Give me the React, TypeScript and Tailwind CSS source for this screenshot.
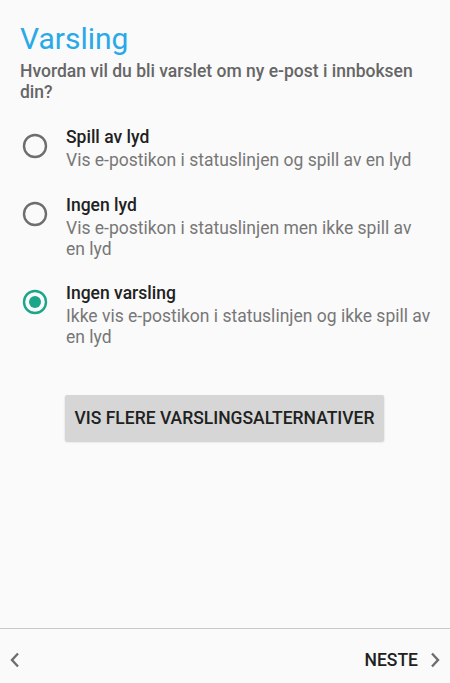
import React from 'react';

// line breaks follow the original screen
const OPTIONS = [
  { id: 'lyd', title: 'Spill av lyd', desc: 'Vis e-postikon i statuslinjen og spill av en lyd' },
  { id: 'ingen-lyd', title: 'Ingen lyd', desc: 'Vis e-postikon i statuslinjen men ikke spill av\nen lyd' },
  { id: 'ingen', title: 'Ingen varsling', desc: 'Ikke vis e-postikon i statuslinjen og ikke spill av\nen lyd' },
];

function Radio({ checked }: { checked: boolean }) {
  return (
    <svg width="26" height="26" viewBox="0 0 26 26" className="shrink-0">
      <circle cx="13" cy="13" r="11" fill="none" stroke={checked ? '#1aa68a' : '#6e6e6e'} strokeWidth="2.4" />
      {checked && <circle cx="13" cy="13" r="6" fill="#1aa68a" />}
    </svg>
  );
}

export default function App() {
  const selected = 'ingen';

  return (
    <div className="w-[450px] h-[683px] bg-[#fafafa] flex flex-col font-['Roboto',sans-serif] overflow-hidden">
      {/* Content */}
      <div className="flex-1 px-5 pt-[21px]">
        <h1 className="text-[30px] leading-[36px] text-[#29a9e8] font-normal">Varsling</h1>
        <p className="mt-[4px] text-[17.5px] leading-[21px] font-medium text-[#666666] pr-2">
          Hvordan vil du bli varslet om ny e-post i innboksen din?
        </p>

        <div className="mt-[22px] flex flex-col gap-[21.5px] -mr-3">
          {OPTIONS.map((o) => (
            <div key={o.id} className="flex items-start">
              <div className="w-[46px] pt-[8px] shrink-0">
                <div className="ml-[2px]">
                  <Radio checked={selected === o.id} />
                </div>
              </div>
              <div className="flex flex-col">
                <span className="text-[17.5px] leading-[24px] font-medium text-[#212121]">{o.title}</span>
                <span className="mt-[1px] text-[17.5px] leading-[21px] text-[#777777] whitespace-pre-line">{o.desc}</span>
              </div>
            </div>
          ))}
        </div>

        <div className="mt-[47px] flex justify-center">
          <button className="w-[319px] h-[46px] ml-[-1px] bg-[#d6d6d6] rounded-[2px] shadow-[0_1px_2px_rgba(0,0,0,0.2)] text-[17.5px] font-medium text-[#212121]">
            VIS FLERE VARSLINGSALTERNATIVER
          </button>
        </div>
      </div>

      {/* Bottom bar */}
      <div className="h-[1.5px] bg-[#c8c8c8]" />
      <div className="h-[54px] flex items-center justify-between pt-[8px] pl-[8px] pr-[8px]">
        <svg width="14" height="20" viewBox="0 0 14 20">
          <path d="M10 3.5 L4 10 L10 16.5" fill="none" stroke="#6e6e6e" strokeWidth="2.4" />
        </svg>
        <div className="flex items-center gap-[10px]">
          <span className="text-[17.5px] font-medium text-[#212121]">NESTE</span>
          <svg width="14" height="20" viewBox="0 0 14 20">
            <path d="M4 3.5 L10 10 L4 16.5" fill="none" stroke="#6e6e6e" strokeWidth="2.4" />
          </svg>
        </div>
      </div>
    </div>
  );
}
